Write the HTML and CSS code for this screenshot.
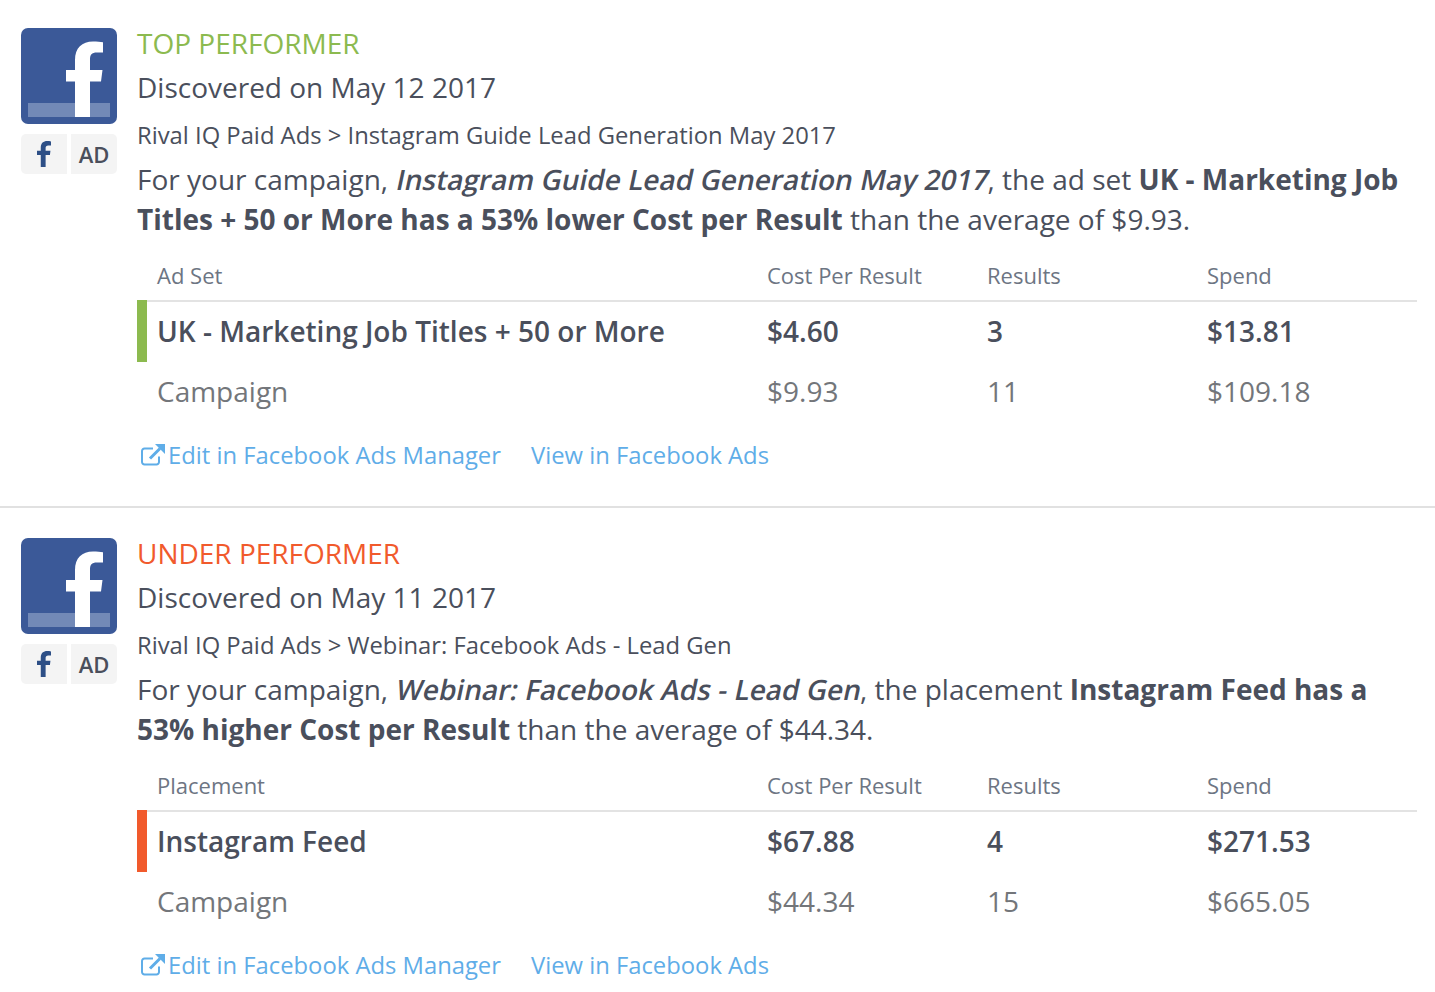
FILE: index.html
```html
<!DOCTYPE html>
<html lang="en">
<head>
<meta charset="utf-8">
<title>Paid ad insights</title>
<link rel="stylesheet" href="styles.css">
</head>
<body>
<svg class="defs" width="0" height="0" aria-hidden="true">
  <symbol id="fb-f" viewBox="0 0 96 96">
    <path d="M54 89V53.500H45V42H54V32C54 20 61 13.500 72 13.500C76 13.500 79.500 13.800 82 14.200V24.500H76C70.500 24.500 69 27 69 31.500V42H81.500L80 53.500H69V89Z"/>
  </symbol>
</svg>

<article class="insight">
  <aside class="side">
    <div class="logo">
      <span class="logo-band"></span>
      <svg class="logo-f"><use href="#fb-f"/></svg>
    </div>
    <div class="chips">
      <span class="chip"><svg class="chip-f" viewBox="0 0 13 24"><path d="M3.500 24V13H0V9H3.500V6C3.500 2 6 0 9.500 0C10.800 0 12 .1 13 .3V4H10.500C8.700 4 8 5 8 6.500V9H12.500L12 13H8V24Z"/></svg></span>
      <span class="chip">AD</span>
    </div>
  </aside>
  <div class="main">
    <h2 class="status status-top">TOP PERFORMER</h2>
    <p class="date">Discovered on May 12 2017</p>
    <p class="crumb">Rival IQ Paid Ads &gt; Instagram Guide Lead Generation May 2017</p>
    <p class="summary">For your campaign, <em class="slant">Instagram Guide Lead Generation May 2017</em>, the ad set <b>UK - Marketing Job Titles + 50 or More has a 53% lower Cost per Result</b> than the average of $9.93.</p>
    <div class="table">
      <div class="row head"><span>Ad Set</span><span>Cost Per Result</span><span>Results</span><span>Spend</span></div>
      <div class="row hero hero-top"><span>UK - Marketing Job Titles + 50 or More</span><span>$4.60</span><span>3</span><span>$13.81</span></div>
      <div class="row base"><span>Campaign</span><span>$9.93</span><span>11</span><span>$109.18</span></div>
    </div>
    <div class="links">
      <a class="link" href="#"><svg class="ext" viewBox="0 0 24 24"><path d="M18 13.500V19A2.500 2.500 0 0 1 15.500 21.500H3.500A2.500 2.500 0 0 1 1 19V8A2.500 2.500 0 0 1 3.500 5.500H12" fill="none" stroke="currentColor" stroke-width="2"/><path d="M9 15.500L19 5.500" fill="none" stroke="currentColor" stroke-width="3"/><path d="M14 1H24V11Z" fill="currentColor"/></svg>Edit in Facebook Ads Manager</a>
      <a class="link" href="#">View in Facebook Ads</a>
    </div>
  </div>
</article>

<article class="insight">
  <aside class="side">
    <div class="logo">
      <span class="logo-band"></span>
      <svg class="logo-f"><use href="#fb-f"/></svg>
    </div>
    <div class="chips">
      <span class="chip"><svg class="chip-f" viewBox="0 0 13 24"><path d="M3.500 24V13H0V9H3.500V6C3.500 2 6 0 9.500 0C10.800 0 12 .1 13 .3V4H10.500C8.700 4 8 5 8 6.500V9H12.500L12 13H8V24Z"/></svg></span>
      <span class="chip">AD</span>
    </div>
  </aside>
  <div class="main">
    <h2 class="status status-under">UNDER PERFORMER</h2>
    <p class="date">Discovered on May 11 2017</p>
    <p class="crumb">Rival IQ Paid Ads &gt; Webinar: Facebook Ads - Lead Gen</p>
    <p class="summary">For your campaign, <em class="slant">Webinar: Facebook Ads - Lead Gen</em>, the placement <b>Instagram Feed has a 53% higher Cost per Result</b> than the average of $44.34.</p>
    <div class="table">
      <div class="row head"><span>Placement</span><span>Cost Per Result</span><span>Results</span><span>Spend</span></div>
      <div class="row hero hero-under"><span>Instagram Feed</span><span>$67.88</span><span>4</span><span>$271.53</span></div>
      <div class="row base"><span>Campaign</span><span>$44.34</span><span>15</span><span>$665.05</span></div>
    </div>
    <div class="links">
      <a class="link" href="#"><svg class="ext" viewBox="0 0 24 24"><path d="M18 13.500V19A2.500 2.500 0 0 1 15.500 21.500H3.500A2.500 2.500 0 0 1 1 19V8A2.500 2.500 0 0 1 3.500 5.500H12" fill="none" stroke="currentColor" stroke-width="2"/><path d="M9 15.500L19 5.500" fill="none" stroke="currentColor" stroke-width="3"/><path d="M14 1H24V11Z" fill="currentColor"/></svg>Edit in Facebook Ads Manager</a>
      <a class="link" href="#">View in Facebook Ads</a>
    </div>
  </div>
</article>
</body>
</html>
```
FILE: styles.css
```css
* { box-sizing: border-box; }
html, body { margin: 0; padding: 0; }
body {
  background: #fff;
  color: #4a4f5c;
  font-family: "Open Sans", sans-serif;
  height: 992px;
  overflow: hidden;
}
.defs { position: absolute; }
.insight {
  display: flex;
  gap: 20px;
  height: 508px;
  margin-bottom: 2px;
  padding: 21px 18px 0 21px;
  border-bottom: 2px solid #e1e1e1;
}
.insight:last-of-type { border-bottom: 0; }
.side { width: 96px; flex: none; padding-top: 7px; }
.logo {
  position: relative;
  width: 96px;
  height: 96px;
  background: #3b5998;
  border-radius: 7px;
  overflow: hidden;
}
.logo-band {
  position: absolute;
  left: 7px;
  right: 7px;
  top: 75px;
  height: 14px;
  background: #7289b7;
}
.logo-f { position: absolute; inset: 0; width: 96px; height: 96px; fill: #fff; }
.chips { display: flex; gap: 4px; margin-top: 10px; }
.chip {
  width: 46px;
  height: 40px;
  display: flex;
  align-items: center;
  justify-content: center;
  background: #f4f4f4;
  font-size: 22px;
  font-weight: 600;
  color: #4a4f5c;
}
.chip:first-child { border-radius: 5px 0 0 5px; }
.chip:last-child { border-radius: 0 5px 5px 0; }
.chip-f { width: 14px; height: 26px; fill: #2d4f86; }
.main { flex: 1; min-width: 0; }
.status { margin: 0; font-size: 28px; font-weight: 400; line-height: 44px; }
.status-top { color: #8cba4f; }
.status-under { color: #f15a2c; }
.date { margin: 0; font-size: 28px; line-height: 44px; }
.crumb { margin: 2px 0 0; font-size: 23.8px; line-height: 48px; }
.summary { margin: 0; font-size: 28px; line-height: 40px; }
.slant { display: inline-block; font-style: normal; font-weight: 600; transform: skewX(-12deg); transform-origin: 0 75%; }
.table { margin-top: 13px; }
.row { display: grid; grid-template-columns: 630px 220px 220px 210px; align-items: center; }
.row span:first-child { padding-left: 20px; }
.head { height: 50px; padding-bottom: 2px; font-size: 22px; color: #6d7583; border-bottom: 2px solid #e3e3e3; }
.hero { height: 62px; font-size: 28px; font-weight: 600; margin-top: -2px; position: relative; }
.hero::before { content: ""; position: absolute; left: 0; top: 0; bottom: 0; width: 10px; }
.hero-top::before { background: #8cba4f; }
.hero-under::before { background: #f15a2c; }
.base { height: 58px; font-size: 28px; color: #73767a; }
.links { display: flex; gap: 30px; margin-top: 13px; padding-left: 4px; font-size: 23.8px; line-height: 44px; }
.link { color: #5fade8; text-decoration: none; display: flex; align-items: center; gap: 3px; }
.ext { width: 24px; height: 24px; flex: none; }
```
